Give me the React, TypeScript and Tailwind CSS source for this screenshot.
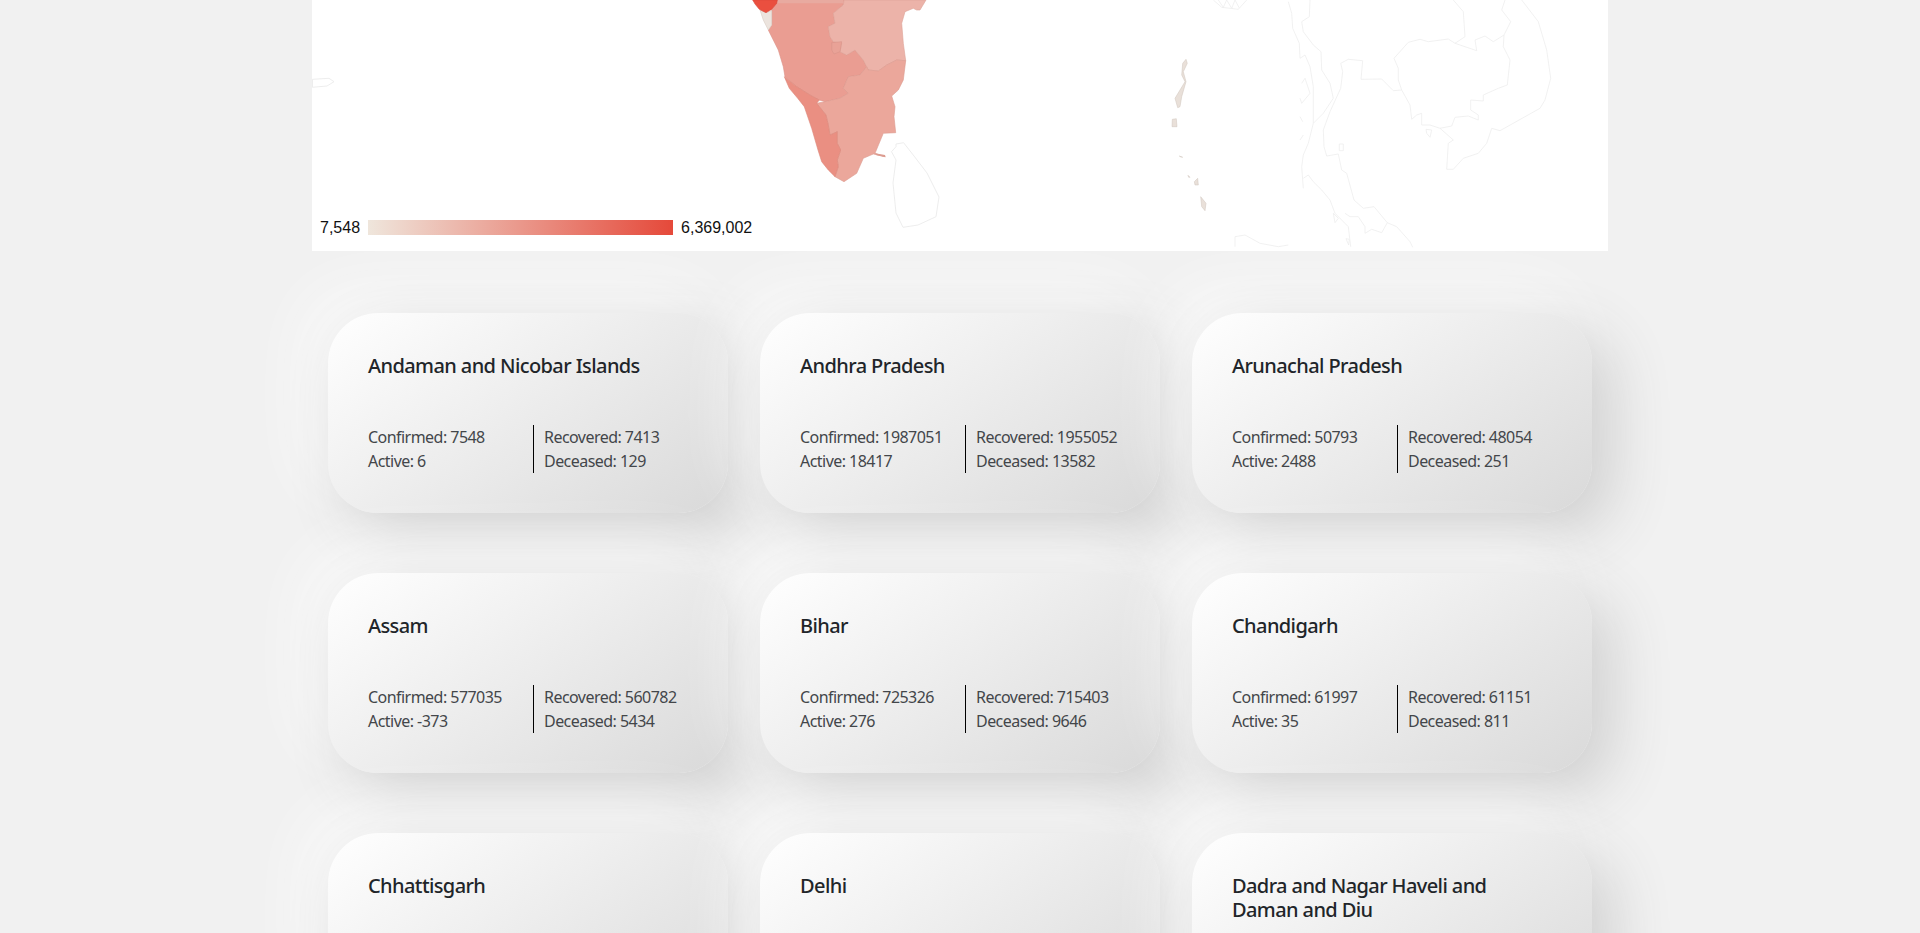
const font = { fontFamily: '"Noto Sans", sans-serif' };

// helpers that convert the traced crop coordinates into page-space point lists
const south = (p: number[][]) => p.map(([x, y]) => `${(700 + x / 3 - 312).toFixed(1)},${(y / 3).toFixed(1)}`).join(" ");
const east = (p: number[][]) => p.map(([x, y]) => `${(1100 + x / 3 - 312).toFixed(1)},${(y / 3).toFixed(1)}`).join(" ");

const karnataka = [[232,0],[215,30],[215,75],[205,90],[235,150],[250,200],[255,230],[290,260],[330,285],[358,300],[375,305],[420,295],[445,280],[430,265],[445,230],[480,225],[500,200],[490,180],[465,150],[440,165],[420,155],[425,130],[400,125],[390,110],[385,80],[405,70],[400,40],[430,15],[432,0]];
const andhra = [[432,0],[678,0],[660,30],[650,30],[640,25],[615,35],[605,70],[610,130],[617,182],[590,180],[560,195],[535,213],[505,210],[490,180],[465,150],[440,165],[420,155],[425,130],[400,125],[390,110],[385,80],[405,70],[400,40],[430,15]];
const tamil = [[617,182],[610,240],[595,270],[575,288],[585,320],[582,350],[587,398],[550,400],[525,460],[555,470],[520,462],[490,475],[470,520],[432,545],[405,530],[415,500],[412,480],[422,450],[412,430],[412,395],[390,405],[385,375],[378,345],[350,310],[375,305],[420,295],[445,280],[430,265],[445,230],[480,225],[500,200],[505,210],[535,213],[560,195],[590,180]];
const kerala = [[253,230],[290,260],[330,285],[358,300],[350,310],[378,345],[385,375],[390,405],[412,395],[412,430],[422,450],[412,480],[415,500],[405,530],[385,510],[365,485],[354,450],[335,385],[313,320],[293,295],[268,265]];
const mahaBand = [[232,0],[430,0],[430,10],[231,10]];
const telBand = [[432,0],[640,0],[640,8],[432,8]];
const mumbai = [[158,0],[165,12],[178,28],[198,38],[215,28],[230,10],[232,0]];
const goa = [[180,30],[190,60],[205,90],[215,75],[215,32],[198,38]];
const puducherry = [[525,460],[555,465],[557,472],[530,466]];
const hyderabad = [[395,128],[425,125],[420,155],[402,162],[395,150]];

const sriLanka = "584,144 591.6,142.7 602,156 615,173 627,197 624,216.7 606,225 591,227.3 584,213 581,183 584,160 579.5,151.7 584,146.7";
const leftIsland = "0.5,79.3 17,78.3 22,81.7 15,86 0.5,87.3";

const lines: number[][][] = [
  [[565,5],[575,40],[578,85],[598,130],[600,175],[615,165],[630,200],[640,260],[640,300],[640,370]],
  [[630,0],[628,50],[605,65],[610,95],[640,135],[663,155],[665,210],[690,250],[700,295],[670,340],[640,370],[625,430],[610,465],[605,500],[610,565]],
  [[788,182],[745,178],[722,190],[728,215],[722,265],[690,335],[670,390],[672,440],[680,468],[715,462],[725,510],[740,520],[762,600],[790,625],[822,620],[862,668],[890,680],[930,725],[938,742]],
  [[788,182],[783,238],[845,237],[880,272],[905,270]],
  [[882,175],[925,127],[960,118],[985,125],[1045,117],[1065,130],[1130,152],[1125,120],[1155,108],[1180,125],[1212,105],[1210,140],[1230,180],[1222,255],[1195,265],[1150,285],[1150,303],[1112,300],[1112,330],[1135,345],[1135,360],[1105,348],[1065,352],[1055,378],[1020,385],[990,375],[965,375],[965,340],[950,345],[935,358],[930,315],[905,270],[895,240],[895,205],[882,175]],
  [[1060,0],[1090,35],[1095,110],[1065,130]],
  [[1265,0],[1315,65],[1340,150],[1352,235],[1335,300],[1320,325],[1200,392],[1175,385],[1160,430],[1135,460],[1090,475],[1060,508],[1040,508],[1045,430],[1060,420],[1020,385]],
  [[1215,0],[1205,30],[1232,65],[1212,105]],
  [[735,640],[750,650],[775,650],[795,680],[795,700],[815,688],[845,698],[862,668]],
  [[610,535],[625,525],[640,545],[665,570],[690,600],[705,640],[745,680],[752,740]],
  [[405,740],[405,710],[435,705],[480,730],[535,740],[565,735]],
  [[340,0],[365,22],[415,28],[440,0]],
  [[355,0],[370,22],[380,0],[395,25],[405,0],[418,24]],
  [[605,250],[615,235],[630,280],[605,310],[600,295]],
  [[978,388],[995,390],[990,412],[980,400],[978,388]],
  [[718,432],[730,432],[730,452],[718,452],[718,432]],
  [[700,640],[715,655],[705,668],[700,640]],
  [[738,716],[748,718],[746,735],[738,716]],
  [[600,350],[608,365]],
  [[600,420],[610,405]],
];

const andamans: number[][][] = [
  [[258,178],[248,190],[245,225],[255,245],[225,295],[233,323],[240,320],[245,290],[258,245],[250,215],[262,190]],
  [[217,358],[229,356],[231,380],[216,380]],
  [[302,590],[318,610],[315,632],[305,620]],
  [[283,545],[293,535],[295,555],[285,555]],
  [[238,468],[248,472],[240,470]],
  [[264,526],[270,532],[266,532]],
];

function IndiaMap() {
  return (
    <svg viewBox="0 0 1296 251" className="block w-full h-full">
      <polygon points={south(telBand)} fill="#ecb5ab" />
      <polygon points={south(karnataka)} fill="#ea9d92" stroke="#dc9186" strokeWidth="0.6" />
      <polygon points={south(andhra)} fill="#ecb3a9" stroke="#dea297" strokeWidth="0.6" />
      <polygon points={south(tamil)} fill="#eba79b" stroke="#dc9a8e" strokeWidth="0.6" />
      <polygon points={south(kerala)} fill="#ea8f82" stroke="#dc8679" strokeWidth="0.6" />
      <polygon points={south(hyderabad)} fill="#e9a297" stroke="#d99489" strokeWidth="0.6" />
      <polygon points={south(puducherry)} fill="#dc9c90" />
      <polygon points={south(mahaBand)} fill="#e8aaa0" />
      <polygon points={south(goa)} fill="#ece4de" stroke="#d9cdc5" strokeWidth="0.6" />
      <polygon points={south(mumbai)} fill="#ea4f3f" stroke="#d8483a" strokeWidth="0.6" />
      <polygon points={sriLanka} fill="#ffffff" stroke="#ebebeb" strokeWidth="0.9" />
      <polygon points={leftIsland} fill="#ffffff" stroke="#ebebeb" strokeWidth="0.9" />
      {lines.map((l, i) => (
        <polyline key={i} points={east(l)} fill="none" stroke="#eeeeee" strokeWidth="0.8" />
      ))}
      {andamans.map((l, i) => (
        <polygon key={i} points={east(l)} fill="#e9e0d9" stroke="#cfc5bd" strokeWidth="0.5" />
      ))}
    </svg>
  );
}

type Row = { name: string; c?: number; r?: number; a?: number; d?: number };
const states: Row[] = [
  { name: "Andaman and Nicobar Islands", c: 7548, r: 7413, a: 6, d: 129 },
  { name: "Andhra Pradesh", c: 1987051, r: 1955052, a: 18417, d: 13582 },
  { name: "Arunachal Pradesh", c: 50793, r: 48054, a: 2488, d: 251 },
  { name: "Assam", c: 577035, r: 560782, a: -373, d: 5434 },
  { name: "Bihar", c: 725326, r: 715403, a: 276, d: 9646 },
  { name: "Chandigarh", c: 61997, r: 61151, a: 35, d: 811 },
  { name: "Chhattisgarh" },
  { name: "Delhi" },
  { name: "Dadra and Nagar Haveli and Daman and Diu" },
];

function Card({ s }: { s: Row }) {
  return (
    <div className="mx-4 mb-[60px] h-[200px] rounded-[50px] bg-[linear-gradient(145deg,#ffffff,#d9d9d9)] shadow-[20px_20px_60px_#cfcfcf,-20px_-20px_60px_#fbfbfb] p-10 flex flex-col justify-between">
      <h5 className="pt-px text-[20px] leading-6 font-medium text-[#212529] tracking-[-0.6px]">{s.name}</h5>
      {s.c !== undefined && (
        <div className="flex text-base leading-6 text-[#43464a] tracking-[-0.54px]">
          <div className="w-[165px]">
            <div>Confirmed: {s.c}</div>
            <div>Active: {s.a}</div>
          </div>
          <div className="border-l border-black pl-[10px]">
            <div>Recovered: {s.r}</div>
            <div>Deceased: {s.d}</div>
          </div>
        </div>
      )}
    </div>
  );
}

export default function App() {
  return (
    <div style={font} className="h-screen overflow-hidden bg-[#f1f1f1]">
      <div className="w-[1320px] mx-auto px-3">
        <div className="relative h-[251px] bg-white overflow-hidden">
          <IndiaMap />
          <div className="absolute left-2 top-[219px] flex items-start text-base leading-[18px] text-[#111]" style={{ fontFamily: '"Liberation Sans", Arial, sans-serif' }}>
            <span>7,548</span>
            <span className="mx-2 mt-px block h-[15px] w-[305px] bg-[linear-gradient(90deg,#efe6dc,#e5493a)]" />
            <span>6,369,002</span>
          </div>
        </div>
        <div className="grid grid-cols-3 pt-[62px]">
          {states.map((s) => (
            <Card key={s.name} s={s} />
          ))}
        </div>
      </div>
    </div>
  );
}
